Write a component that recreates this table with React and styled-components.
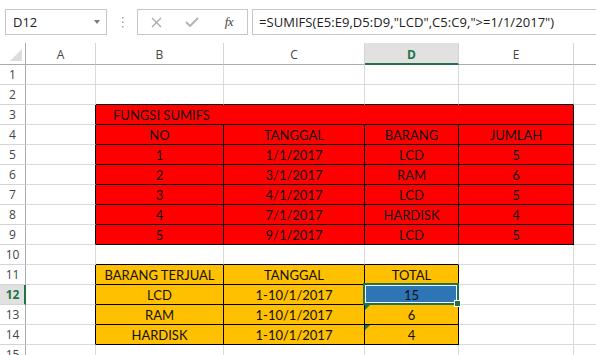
import React from "react";
import styled, { createGlobalStyle } from "styled-components";

const GREEN = "#217346";
const GRID = "#dadada";
const HEAD_LINE = "#ababab";

const GlobalStyle = createGlobalStyle`
  html, body {
    margin: 0;
    padding: 0;
    background: #fff;
    overflow: hidden;
  }
  body {
    font-family: Lato, "Liberation Sans", sans-serif;
  }
`;

const Window = styled.div`
  width: 596px;
  height: 355px;
  overflow: hidden;
  background: #fff;
`;

/* ---------- formula bar ---------- */

const FormulaBar = styled.div`
  display: flex;
  align-items: flex-start;
  height: 43px;
  padding-top: 9px;
  box-sizing: border-box;
  font-family: "Open Sans", "Liberation Sans", sans-serif;
  color: #222;
`;

const NameBox = styled.div`
  margin-left: 5px;
  width: 102px;
  height: 26px;
  box-sizing: border-box;
  border: 1px solid #c6c6c6;
  display: flex;
  align-items: center;
  justify-content: space-between;
  padding: 0 6px 0 7px;
  font-size: 13px;
`;

const DropArrow = styled.span`
  width: 0;
  height: 0;
  border-left: 3.5px solid transparent;
  border-right: 3.5px solid transparent;
  border-top: 4px solid #7a7a7a;
`;

const Grip = styled.div`
  width: 30px;
  height: 26px;
  display: flex;
  align-items: center;
  justify-content: center;
`;

const ButtonGroup = styled.div`
  width: 111px;
  height: 26px;
  box-sizing: border-box;
  border: 1px solid #c6c6c6;
  display: flex;
`;

const BarButton = styled.div`
  flex: 1;
  display: flex;
  align-items: center;
  justify-content: center;
`;

const FxLabel = styled.span`
  font-family: "Liberation Serif", "DejaVu Serif", serif;
  font-style: italic;
  font-size: 13px;
  color: #444;
  letter-spacing: -0.5px;
`;

const FormulaInput = styled.div`
  flex: 1;
  margin-left: 4px;
  height: 26px;
  box-sizing: border-box;
  border: 1px solid #c6c6c6;
  border-right: none;
  display: flex;
  align-items: center;
  padding-left: 6px;
  font-size: 13px;
  letter-spacing: 0.05px;
  white-space: nowrap;
`;

/* ---------- sheet ---------- */

const Sheet = styled.div`
  display: grid;
  width: max-content;
  grid-template-columns: 26px 70px 128px 141px 94px 115px 90px;
  grid-template-rows: 22px;
  grid-auto-rows: 20px;
`;

const Corner = styled.div`
  box-sizing: border-box;
  border-right: 1px solid ${HEAD_LINE};
  border-bottom: 1px solid ${HEAD_LINE};
  display: flex;
  align-items: flex-end;
  justify-content: flex-end;
  padding: 0 3px 3px 0;
`;

const ColHead = styled.div`
  box-sizing: border-box;
  border-right: 1px solid #d4d4d4;
  border-bottom: ${(p) => (p.$active ? `2px solid ${GREEN}` : `1px solid ${HEAD_LINE}`)};
  background: ${(p) => (p.$active ? "#e1e1e1" : "#fff")};
  color: ${(p) => (p.$active ? GREEN : "#444")};
  font-weight: ${(p) => (p.$active ? 700 : 400)};
  font-family: "Open Sans", "Liberation Sans", sans-serif;
  font-size: 12px;
  display: flex;
  align-items: center;
  justify-content: center;
  padding-top: ${(p) => (p.$active ? "2px" : "1px")};
`;

const RowHead = styled.div`
  box-sizing: border-box;
  border-right: ${(p) => (p.$active ? `2px solid ${GREEN}` : `1px solid ${HEAD_LINE}`)};
  border-bottom: 1px solid #d4d4d4;
  background: ${(p) => (p.$active ? "#e1e1e1" : "#fff")};
  color: ${(p) => (p.$active ? GREEN : "#444")};
  font-weight: ${(p) => (p.$active ? 700 : 400)};
  font-family: "Open Sans", "Liberation Sans", sans-serif;
  font-size: 12px;
  display: flex;
  align-items: center;
  justify-content: center;
  padding-left: ${(p) => (p.$active ? "1px" : "0")};
`;

const Cell = styled.div`
  position: relative;
  box-sizing: border-box;
  grid-column: span ${(p) => p.$span || 1};
  background: ${(p) => p.$fill || "#fff"};
  border-right: 1px solid ${(p) => p.$right};
  border-bottom: 1px solid ${(p) => p.$bottom};
  display: flex;
  align-items: flex-end;
  justify-content: ${(p) => (p.$left ? "flex-start" : "center")};
  padding-left: ${(p) => (p.$left ? "17px" : "0")};
  padding-bottom: 1px;
  font-size: 13px;
  line-height: 16px;
  color: #111;
  white-space: nowrap;
`;

const Selection = styled.div`
  position: absolute;
  left: -2px;
  top: -2px;
  right: -1px;
  bottom: -1px;
  border: 2px solid ${GREEN};
  box-shadow: inset 0 0 0 1px #fff;
  z-index: 2;
  pointer-events: none;
`;

const FillHandle = styled.div`
  position: absolute;
  right: -4px;
  bottom: -4px;
  width: 5px;
  height: 5px;
  background: ${GREEN};
  border: 1px solid #fff;
`;

const ErrorMark = styled.div`
  position: absolute;
  left: 0;
  top: 0;
  width: 0;
  height: 0;
  border-top: 5px solid #1e7b45;
  border-right: 5px solid transparent;
`;

/* ---------- data ---------- */

const COLS = ["A", "B", "C", "D", "E", "F"];
const ROW_COUNT = 15;
const ACTIVE = { row: 12, col: 3 };

const sales = [
  ["NO", "TANGGAL", "BARANG", "JUMLAH"],
  ["1", "1/1/2017", "LCD", "5"],
  ["2", "3/1/2017", "RAM", "6"],
  ["3", "4/1/2017", "LCD", "5"],
  ["4", "7/1/2017", "HARDISK", "4"],
  ["5", "9/1/2017", "LCD", "5"],
];

const summary = [
  ["BARANG TERJUAL", "TANGGAL", "TOTAL"],
  ["LCD", "1-10/1/2017", "15"],
  ["RAM", "1-10/1/2017", "6"],
  ["HARDISK", "1-10/1/2017", "4"],
];

function inTable(r, c) {
  if (r >= 3 && r <= 9 && c >= 1 && c <= 4) return true;
  if (r >= 11 && r <= 14 && c >= 1 && c <= 3) return true;
  return false;
}

function cellContent(r, c) {
  if (r >= 4 && r <= 9 && c >= 1 && c <= 4) {
    return { text: sales[r - 4][c - 1], fill: "#ff0000" };
  }
  if (r >= 11 && r <= 14 && c >= 1 && c <= 3) {
    const fill = r === 12 && c === 3 ? "#2e75b6" : "#ffc000";
    return { text: summary[r - 11][c - 1], fill };
  }
  return { text: "", fill: null };
}

function XIcon() {
  return (
    <svg width="11" height="11" viewBox="0 0 11 11">
      <path d="M1 1 L10 10 M10 1 L1 10" stroke="#a8a8a8" strokeWidth="1.3" fill="none" />
    </svg>
  );
}

function CheckIcon() {
  return (
    <svg width="14" height="10" viewBox="0 0 14 10">
      <path d="M1 5 L5 9 L13 1" stroke="#b4b4b4" strokeWidth="2" fill="none" />
    </svg>
  );
}

function GripDots() {
  return (
    <svg width="3" height="11" viewBox="0 0 3 11">
      <rect x="1" y="0" width="1.5" height="1.5" fill="#a0a0a0" />
      <rect x="1" y="4.5" width="1.5" height="1.5" fill="#a0a0a0" />
      <rect x="1" y="9" width="1.5" height="1.5" fill="#a0a0a0" />
    </svg>
  );
}

function SelectAll() {
  return (
    <svg width="12" height="12" viewBox="0 0 12 12">
      <path d="M12 0 L12 12 L0 12 Z" fill="#dcdcdc" />
    </svg>
  );
}

function SheetRow({ r }) {
  const cells = [];
  for (let c = 0; c < COLS.length; c++) {
    const isLast = c === COLS.length - 1;
    if (r === 3 && c === 1) {
      // merged title across B3:E3
      cells.push(
        <Cell key={c} $span={4} $left $fill="#ff0000" $right="#000" $bottom="#000">
          FUNGSI SUMIFS
        </Cell>
      );
      c = 4;
      continue;
    }
    const { text, fill } = cellContent(r, c);
    const right = !isLast && (inTable(r, c) || inTable(r, c + 1)) ? "#000" : GRID;
    const bottom = inTable(r, c) || inTable(r + 1, c) ? "#000" : GRID;
    const active = r === ACTIVE.row && c === ACTIVE.col;
    const flagged = c === 3 && (r === 13 || r === 14);
    cells.push(
      <Cell key={c} $fill={fill} $right={right} $bottom={bottom}>
        {flagged && <ErrorMark />}
        {text}
        {active && (
          <Selection>
            <FillHandle />
          </Selection>
        )}
      </Cell>
    );
  }
  return (
    <>
      <RowHead $active={r === ACTIVE.row}>{r}</RowHead>
      {cells}
    </>
  );
}

export default function App() {
  const rows = Array.from({ length: ROW_COUNT }, (_, i) => i + 1);
  return (
    <Window>
      <GlobalStyle />
      <FormulaBar>
        <NameBox>
          D12
          <DropArrow />
        </NameBox>
        <Grip>
          <GripDots />
        </Grip>
        <ButtonGroup>
          <BarButton>
            <XIcon />
          </BarButton>
          <BarButton>
            <CheckIcon />
          </BarButton>
          <BarButton>
            <FxLabel>fx</FxLabel>
          </BarButton>
        </ButtonGroup>
        <FormulaInput>=SUMIFS(E5:E9,D5:D9,"LCD",C5:C9,"&gt;=1/1/2017")</FormulaInput>
      </FormulaBar>
      <Sheet>
        <Corner>
          <SelectAll />
        </Corner>
        {COLS.map((col, i) => (
          <ColHead key={col} $active={i === ACTIVE.col}>
            {col}
          </ColHead>
        ))}
        {rows.map((r) => (
          <SheetRow key={r} r={r} />
        ))}
      </Sheet>
    </Window>
  );
}
